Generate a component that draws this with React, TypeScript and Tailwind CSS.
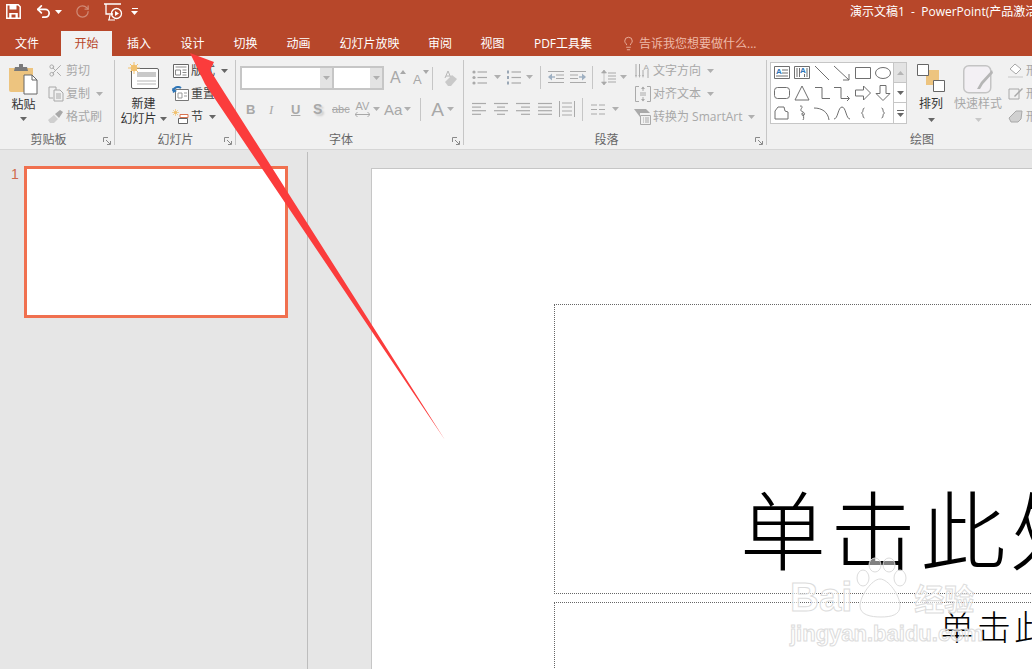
import type { ReactNode } from 'react';
import { Lightbulb, Undo2, RotateCw, Scissors } from 'lucide-react';

// ---- small shared bits ----

const Caret = ({ className = '', tone = 'text-[#b0b0b0]' }: { className?: string; tone?: string }) => (
  <svg width="7" height="4" viewBox="0 0 7 4" className={`shrink-0 ${tone} ${className}`}>
    <path d="M0 0h7L3.5 4z" fill="currentColor" />
  </svg>
);

const Divider = ({ className = '' }: { className?: string }) => <div className={`w-px h-[23px] bg-[#c6c6c6] shrink-0 ${className}`} />;

const Launcher = () => (
  <svg width="8" height="8" viewBox="0 0 8 8" className="absolute right-[4px] bottom-[4px] text-[#8a8a8a]">
    <path d="M.5 5V.5H5M3 3l4 4M7.5 4v3.5H4" fill="none" stroke="currentColor" />
  </svg>
);

function Group({ label, className, labelClass = '', children, last }: { label: string; className: string; labelClass?: string; children: ReactNode; last?: boolean }) {
  return (
    <div className={`relative flex flex-col shrink-0 h-full ${className}`}>
      <div className="flex-1 flex min-h-0">{children}</div>
      <div className={`h-[19px] text-center text-[12px] leading-[19px] text-[#666666] ${labelClass}`}>{label}</div>
      {!last && <Launcher />}
      {!last && <div className="absolute right-0 top-[4px] bottom-[4px] w-px bg-[#c6c6c6]" />}
    </div>
  );
}

const SmallRow = ({ icon, label, caret, dark }: { icon: ReactNode; label: string; caret?: boolean; dark?: boolean }) => (
  <div className={`h-[23px] flex items-center whitespace-nowrap text-[12px] ${dark ? 'text-[#444444]' : 'text-[#a8a8a8]'}`}>
    <span className="w-[17px] flex justify-center shrink-0">{icon}</span>
    <span className="ml-[2px]">{label}</span>
    {caret && <Caret className="ml-[6px]" tone={dark ? 'text-[#666666]' : 'text-[#b0b0b0]'} />}
  </div>
);

// lines used by the paragraph icons: [x1, x2] per row
const LinesIcon = ({ rows, className = '' }: { rows: [number, number][]; className?: string }) => (
  <svg width="15" height="14" viewBox="0 0 15 14" className={`shrink-0 text-[#aaaaaa] ${className}`}>
    {rows.map(([a, b], i) => (
      <path key={i} d={`M${a} ${1.5 + i * 3.6}H${b}`} stroke="currentColor" strokeWidth="1.2" />
    ))}
  </svg>
);

const BulletIcon = ({ numbered, className = '' }: { numbered?: boolean; className?: string }) => (
  <svg width="15" height="15" viewBox="0 0 15 15" className={`shrink-0 text-[#aaaaaa] ${className}`}>
    {[2, 7.5, 13].map((y) => (
      <g key={y}>
        {numbered ? <path d={`M1 ${y - 1.5}h2v3H1z`} fill="#9aa7b5" /> : <circle cx="2" cy={y} r="1.6" fill="currentColor" />}
        <path d={`M5.5 ${y}H15`} stroke="currentColor" strokeWidth="1.2" />
      </g>
    ))}
  </svg>
);

// ---- title bar icons ----

const SaveIcon = () => (
  <svg width="15" height="15" viewBox="0 0 15 15" className="ml-[6px] shrink-0 text-white">
    <path d="M.8.8h11.4l2 2v11.4H.8z" fill="none" stroke="currentColor" strokeWidth="1.5" />
    <path d="M3.5 1h7v4.4h-7zM3.2 9h8.6v5.5H3.2z" fill="currentColor" />
    <path d="M5.5 10.5h4v3h-4z" fill="#b7472a" />
  </svg>
);

const PresentIcon = () => (
  <svg width="20" height="20" viewBox="0 0 20 20" className="text-white">
    <path d="M1 2h17M3 2v10h7" fill="none" stroke="currentColor" strokeWidth="1.3" />
    <circle cx="13.5" cy="11.5" r="5" fill="none" stroke="currentColor" strokeWidth="1.3" />
    <path d="M12 9l4 2.5-4 2.5z" fill="currentColor" />
    <path d="M5 18h7M7 13l-1 5" stroke="currentColor" strokeWidth="1.2" />
  </svg>
);

// ---- ribbon icons ----

const PasteIcon = () => (
  <svg width="29" height="31" viewBox="0 0 29 31">
    <path d="M0 4h24v24H2a2 2 0 0 1-2-2z" fill="#edc47f" />
    <path d="M6 3h4V1a2 2 0 0 1 4 0v2h4l1 4H5z" fill="#7a7a7a" />
    <path d="M15 11h8l5 5v14H15z" fill="#fff" stroke="#666" />
    <path d="M23 11v5h5" fill="none" stroke="#666" />
  </svg>
);

const CopyIcon = () => (
  <svg width="16" height="16" viewBox="0 0 16 16" className="text-[#a8a8a8]">
    <path d="M1 1h7v3M1 1v11h4M6 4h6l3 3v8H6z" fill="none" stroke="currentColor" />
    <path d="M8 8h5M8 10h5M8 12h5" stroke="currentColor" />
  </svg>
);

const BrushIcon = () => (
  <svg width="17" height="15" viewBox="0 0 17 15">
    <path d="M1 11l6-5 4 4-4 4H3z" fill="#cfcfcf" />
    <path d="M8 5l5-4 3 2-4 6z" fill="#a8a8a8" />
  </svg>
);

const NewSlideIcon = () => (
  <svg width="31" height="28" viewBox="0 0 31 28">
    <rect x="3.5" y="6.5" width="27" height="20" rx="1.5" fill="#fff" stroke="#666" />
    <path d="M9 10h19v5H9z" fill="#c9c9c9" />
    <path d="M9 19h19M9 22h19" stroke="#b5b5b5" />
    <circle cx="6" cy="6" r="3.2" fill="#f1c16f" />
    <path d="M6 0v12M0 6h12M2 2l8 8M10 2l-8 8" stroke="#f1c16f" />
  </svg>
);

const LayoutIcon = () => (
  <svg width="16" height="14" viewBox="0 0 16 14">
    <path d="M.5.5h15v13H.5z" fill="#fff" stroke="#666" />
    <path d="M2.5 3h11M2.5 6h5v5h-5zM9.5 6h4M9.5 8.500h4M9.500 11h4" fill="none" stroke="#8a8a8a" />
  </svg>
);

const ResetIcon = () => (
  <svg width="17" height="15" viewBox="0 0 17 15">
    <path d="M3.500 3.500h13v11h-13z" fill="#fff" stroke="#777" />
    <path d="M6 7h4v5H6zM12 7h3M12 10h3" fill="none" stroke="#999" />
    <path d="M1 5a5 5 0 0 1 8-3" fill="none" stroke="#2e75b6" strokeWidth="2" />
    <path d="M0 2l1 5 4-2z" fill="#2e75b6" />
  </svg>
);

const SectionIcon = () => (
  <svg width="17" height="15" viewBox="0 0 17 15">
    <path d="M8 5.500h8v3H8z" fill="#fff" stroke="#d9734e" />
    <path d="M6.500 9.500h9v5h-9z" fill="#fff" stroke="#666" />
    <circle cx="3.500" cy="3.500" r="1.600" fill="#f1c16f" />
    <path d="M3.500 0v7M0 3.500h7M1 1l5 5M6 1L1 6" stroke="#f1c16f" strokeWidth=".7" />
  </svg>
);

const GrowIcon = ({ up }: { up: boolean }) => (
  <span className="relative flex items-end h-[16px] w-[16px] text-[#a8a8a8]">
    <span className={`leading-none font-['Liberation_Sans',sans-serif] ${up ? 'text-[16px]' : 'text-[13px]'}`}>A</span>
    <svg width="6" height="4" viewBox="0 0 6 4" className="absolute right-0 top-0">
      <path d={up ? 'M0 4h6L3 0z' : 'M0 0h6L3 4z'} fill="currentColor" />
    </svg>
  </span>
);

const EraserIcon = () => (
  <svg width="15" height="17" viewBox="0 0 15 17">
    <path d="M6 1L3 8M6 1l3 7M4 6h4" fill="none" stroke="#b8b8b8" />
    <path d="M3 12l7-7 5 4-6 7H6z" fill="#c9c9c9" />
  </svg>
);

const SpacingIcon = () => (
  <svg width="15" height="17" viewBox="0 0 15 17" className="text-[#aaaaaa] shrink-0">
    <path d="M3 1v15M0.500 4L3 1l2.500 3zM.5 13L3 16l2.500-3z" fill="currentColor" stroke="currentColor" strokeWidth=".6" />
    <path d="M7 4h8M7 7h8M7 10h8M7 13h8" stroke="currentColor" strokeWidth="1.100" />
  </svg>
);

const IndentIcon = ({ flip }: { flip?: boolean }) => (
  <svg width="16" height="14" viewBox="0 0 16 14" className={`text-[#aaaaaa] shrink-0 ${flip ? 'scale-x-[-1]' : ''}`}>
    <path d="M0 1.500h16M8 5h8M8 8.500h8M0 12.500h16" stroke="currentColor" strokeWidth="1.200" />
    <path d="M1 7h6" stroke="#9fb0c2" strokeWidth="1.400" />
    <path d="M4 3.500L0 7l4 3.500z" fill="#9fb0c2" />
  </svg>
);

const TextDirIcon = () => (
  <svg width="16" height="16" viewBox="0 0 16 16" className="text-[#aaaaaa]">
    <path d="M1 1v11M4.500 1v11M8 7v5" stroke="currentColor" />
    <path d="M0 12l1 3 1-3M3.500 12l1 3 1-3M7 12l1 3 1-3" fill="currentColor" />
    <text x="8.500" y="7" fontSize="8" fill="currentColor" fontFamily="Liberation Sans">A</text>
    <path d="M13 7v8" stroke="currentColor" />
  </svg>
);

const AlignTextIcon = () => (
  <svg width="16" height="16" viewBox="0 0 16 16" className="text-[#aaaaaa]">
    <path d="M4 .500H.5v15H4M12 .500h3.500v15H12" fill="none" stroke="currentColor" />
    <path d="M8 1v4M8 15v-4M5 7h6M5 9h6" stroke="currentColor" />
    <path d="M6 3l2-2.500L10 3zM6 13l2 2.500L10 13z" fill="currentColor" />
  </svg>
);

const SmartArtIcon = () => (
  <svg width="17" height="16" viewBox="0 0 17 16" className="text-[#aaaaaa]">
    <path d="M0 0h12l4 4H6v4z" fill="currentColor" />
    <path d="M6.500 6.500h10v9h-10z" fill="#f1f1f1" stroke="currentColor" />
    <path d="M9 9h1M11 9h4M9 11h1M11 11h4M9 13h1M11 13h4" stroke="currentColor" />
  </svg>
);

// ---- shape gallery ----

const stroke = { fill: 'none', stroke: '#6f6f6f', strokeWidth: 1 };
const gallery: ReactNode[] = [
  <g key="0"><path d="M2.500 3.500h15v12h-15z" {...stroke} /><text x="4" y="11" fontSize="8" fontWeight="700" fill="#2e75b6" fontFamily="Liberation Sans">A</text><path d="M10 7h6M10 10h6M4 13h12" {...stroke} /></g>,
  <g key="1"><path d="M2.500 3.500h15v12h-15z" {...stroke} /><text x="8" y="10" fontSize="8" fontWeight="700" fill="#2e75b6" fontFamily="Liberation Sans">A</text><path d="M5 5v9M7.500 5v9M12.500 11v3M15 5v9" {...stroke} /></g>,
  <path key="2" d="M3 3l14 14" {...stroke} />,
  <path key="3" d="M2 3l15 14M17 11v6h-6" {...stroke} />,
  <path key="4" d="M2.500 4.500h15v11h-15z" {...stroke} />,
  <ellipse key="5" cx="10" cy="10" rx="7.500" ry="5.500" {...stroke} />,
  <rect key="6" x="2.500" y="4.500" width="15" height="11" rx="3" {...stroke} />,
  <path key="7" d="M10 3l7 14H3z" {...stroke} />,
  <path key="8" d="M3 4.500h7v11h8" {...stroke} />,
  <path key="9" d="M2 4.500h7v11h8M15 13l2.500 2.500L15 18" {...stroke} />,
  <path key="10" d="M2.500 7h8V3l7 7-7 7v-4h-8z" {...stroke} />,
  <path key="11" d="M7 2.500h6v8h4l-7 7-7-7h4z" {...stroke} />,
  <path key="12" d="M6 4h6l1 4 3 1v7H3V8z" {...stroke} />,
  <path key="13" d="M8 3c6 0-3 4 3 6 4 2-1 6-1 2s3 4 1 6" {...stroke} />,
  <path key="14" d="M2 5c8 0 14 4 15 12" {...stroke} />,
  <path key="15" d="M2 16C6 16 6 4 10 4s4 12 8 12" {...stroke} />,
  <path key="16" d="M11.500 5c-2.500 0-.5 4-3 5 2.500 1 .5 5 3 5" {...stroke} />,
  <path key="17" d="M8.500 5c2.500 0 .5 4 3 5-2.500 1-.5 5-3 5" {...stroke} />,
];

export default function App() {
  const tabs = [
    { label: '文件', w: 'w-[54px] mr-[7px]' },
    { label: '开始', w: 'w-[51px]', active: true },
    { label: '插入', w: 'w-[54px]' },
    { label: '设计', w: 'w-[53px]' },
    { label: '切换', w: 'w-[53px]' },
    { label: '动画', w: 'w-[53px]' },
    { label: '幻灯片放映', w: 'w-[89px]' },
    { label: '审阅', w: 'w-[52px]' },
    { label: '视图', w: 'w-[53px]' },
    { label: 'PDF工具集', w: 'w-[88px]' },
  ];

  return (
    <div className="relative w-[1032px] h-[669px] overflow-hidden flex flex-col bg-[#e6e6e6] font-['Open_Sans','Noto_Sans_CJK_SC',sans-serif]">
      {/* Title bar */}
      <div className="h-[31px] shrink-0 bg-[#b7472a] flex items-center text-white pb-[8px]">
        <SaveIcon />
        <Undo2 className="ml-[14px] w-[17px] h-[17px] shrink-0" strokeWidth={2.4} />
        <Caret className="ml-[3px]" tone="text-white" />
        <RotateCw className="ml-[13px] w-[15px] h-[15px] shrink-0 text-[#d08a76]" strokeWidth={2} />
        <span className="ml-[13px] shrink-0"><PresentIcon /></span>
        <span className="ml-[8px] shrink-0 flex flex-col items-center gap-[2px]">
          <span className="w-[6px] h-px bg-white" />
          <Caret tone="text-white" />
        </span>
        <span className="ml-[712px] shrink-0 text-[12px] whitespace-nowrap">演示文稿1{'\u00a0'} - {'\u00a0'}PowerPoint(产品激活失败)</span>
      </div>

      {/* Tabs */}
      <div className="h-[25px] shrink-0 bg-[#b7472a] flex items-stretch text-[12px] text-white">
        {tabs.map((t) => (
          <div key={t.label} className={`${t.w} shrink-0 flex items-center justify-center whitespace-nowrap ${t.active ? 'bg-[#f1f1f1] text-[#b7472a]' : ''}`}>
            {t.label}
          </div>
        ))}
        <div className="ml-[14px] flex items-center text-[#eeb9a8] whitespace-nowrap">
          <Lightbulb className="w-[15px] h-[15px]" strokeWidth={1.4} />
          <span className="ml-[3px]">告诉我您想要做什么...</span>
        </div>
      </div>

      {/* Ribbon */}
      <div className="h-[94px] shrink-0 bg-[#f1f1f1] border-b border-[#d6d6d6] flex">
        <Group label="剪贴板" className="w-[115px]" labelClass="pr-[18px]">
          <div className="w-[47px] shrink-0 flex flex-col items-center pt-[8px]">
            <PasteIcon />
            <span className="mt-[1px] text-[12px] leading-[17px] text-[#333333]">粘贴</span>
            <Caret className="mt-[4px]" tone="text-[#666666]" />
          </div>
          <div className="pt-[3px]">
            <SmallRow icon={<Scissors className="w-[15px] h-[15px] text-[#a8a8a8]" strokeWidth={1.5} />} label="剪切" />
            <SmallRow icon={<CopyIcon />} label="复制" caret />
            <SmallRow icon={<BrushIcon />} label="格式刷" />
          </div>
        </Group>

        <Group label="幻灯片" className="w-[121px]">
          <div className="w-[57px] shrink-0 flex flex-col items-center pt-[6px]">
            <NewSlideIcon />
            <span className="mt-[6px] text-[12px] leading-[15px] text-[#333333]">新建</span>
            <span className="flex items-center text-[12px] leading-[15px] text-[#333333] whitespace-nowrap">幻灯片<Caret className="ml-[3px]" tone="text-[#666666]" /></span>
          </div>
          <div className="pt-[3px]">
            <SmallRow dark icon={<LayoutIcon />} label="版式" caret />
            <SmallRow dark icon={<ResetIcon />} label="重置" />
            <SmallRow dark icon={<SectionIcon />} label="节" caret />
          </div>
        </Group>

        <Group label="字体" className="w-[228px]" labelClass="pr-[18px]">
          <div className="flex flex-col pl-[4px] pt-[10px]">
            <div className="flex items-center h-[24px]">
              <div className="w-[94px] h-[24px] border-2 border-[#c6c6c6] bg-white flex justify-end">
                <div className="w-[12px] bg-[#e3e3e3] flex items-center justify-center"><Caret /></div>
              </div>
              <div className="w-[50px] h-[24px] border-2 border-l-0 border-[#c6c6c6] bg-white flex justify-end">
                <div className="w-[12px] bg-[#e3e3e3] flex items-center justify-center"><Caret /></div>
              </div>
              <span className="ml-[6px]"><GrowIcon up /></span>
              <span className="ml-[7px]"><GrowIcon up={false} /></span>
              <Divider className="ml-[3px]" />
              <span className="ml-[9px]"><EraserIcon /></span>
            </div>
            <div className="flex items-center h-[24px] mt-[7px] text-[#a8a8a8] font-['Liberation_Sans',sans-serif] leading-none">
              <span className="ml-[6px] w-[12px] text-[13px] font-bold">B</span>
              <span className="ml-[11px] w-[10px] text-[13px] italic font-['Liberation_Serif',serif]">I</span>
              <span className="ml-[12px] w-[12px] text-[13px] font-bold underline">U</span>
              <span className="ml-[10px] w-[12px] text-[14px] font-bold [text-shadow:2px_2px_2px_#cccccc]">S</span>
              <span className="ml-[7px] w-[18px] text-[11px] line-through">abc</span>
              <span className="ml-[4px] w-[17px] flex flex-col items-center text-[11px]">
                AV
                <svg width="15" height="5" viewBox="0 0 15 5"><path d="M0 2.500h15M2.500 0L0 2.500 2.500 5M12.500 0L15 2.500 12.500 5" fill="none" stroke="currentColor" /></svg>
              </span>
              <Caret className="ml-[2px]" />
              <span className="ml-[4px] text-[15px]">Aa</span>
              <Caret className="ml-[2px]" />
              <Divider className="ml-[9px]" />
              <span className="ml-[10px] text-[19px]">A</span>
              <Caret className="ml-[3px]" />
            </div>
          </div>
        </Group>

        <Group label="段落" className="w-[303px]" labelClass="pr-[18px]">
          <div className="w-[170px] shrink-0 flex flex-col pl-[8px] pt-[9px]">
            <div className="flex items-center h-[24px]">
              <BulletIcon />
              <Caret className="ml-[7px]" />
              <BulletIcon numbered className="ml-[5px]" />
              <Caret className="ml-[5px]" />
              <Divider className="ml-[7px]" />
              <span className="ml-[7px]"><IndentIcon /></span>
              <span className="ml-[6px]"><IndentIcon flip /></span>
              <Divider className="ml-[6px]" />
              <span className="ml-[8px]"><SpacingIcon /></span>
              <Caret className="ml-[4px]" />
            </div>
            <div className="flex items-center h-[24px] mt-[8px]">
              <LinesIcon rows={[[0, 14], [0, 9], [0, 14], [0, 9]]} />
              <LinesIcon className="ml-[7px]" rows={[[0, 14], [3, 11], [0, 14], [3, 11]]} />
              <LinesIcon className="ml-[7px]" rows={[[0, 14], [5, 14], [0, 14], [5, 14]]} />
              <LinesIcon className="ml-[7px]" rows={[[0, 14], [0, 14], [0, 14], [0, 14]]} />
              <svg width="16" height="16" viewBox="0 0 16 16" className="ml-[6px] text-[#aaaaaa] shrink-0">
                <path d="M.5 0v16M15.500 0v16M3 2h10M3 6h10M3 10h10M3 14h10" stroke="currentColor" />
              </svg>
              <Divider className="ml-[7px]" />
              <svg width="14" height="11" viewBox="0 0 14 11" className="ml-[8px] text-[#aaaaaa] shrink-0">
                <path d="M0 1h6M8 1h6M0 5.500h6M8 5.500h6M0 10h6M8 10h6" stroke="currentColor" strokeWidth="1.200" />
              </svg>
              <Caret className="ml-[7px]" />
            </div>
          </div>
          <div className="pt-[3px]">
            <SmallRow icon={<TextDirIcon />} label="文字方向" caret />
            <SmallRow icon={<AlignTextIcon />} label="对齐文本" caret />
            <SmallRow icon={<SmartArtIcon />} label="转换为 SmartArt" caret />
          </div>
        </Group>

        <Group label="绘图" className="w-[310px]" last>
          <div className="flex pl-[3px] pt-[6px] items-start">
            <div className="w-[137px] h-[62px] shrink-0 border border-[#c6c6c6] flex">
              <div className="w-[122px] bg-white grid grid-cols-6 auto-rows-[20px] pl-px">
                {gallery.map((g, i) => (
                  <svg key={i} width="20" height="20" viewBox="0 0 20 20">{g}</svg>
                ))}
              </div>
              <div className="flex-1 border-l border-[#c6c6c6] flex flex-col bg-white">
                <div className="h-[20px] bg-[#e3e3e3] flex items-center justify-center border-b border-[#c6c6c6]">
                  <svg width="7" height="4" viewBox="0 0 7 4"><path d="M0 4h7L3.500 0z" fill="#b5b5b5" /></svg>
                </div>
                <div className="h-[20px] flex items-center justify-center border-b border-[#c6c6c6]"><Caret tone="text-[#666666]" /></div>
                <div className="flex-1 flex flex-col items-center justify-center gap-[2px]">
                  <span className="w-[7px] h-px bg-[#666666]" />
                  <Caret tone="text-[#666666]" />
                </div>
              </div>
            </div>
            <div className="w-[48px] shrink-0 flex flex-col items-center">
              <svg width="28" height="28" viewBox="0 0 28 28" className="mt-[2px]">
                <path d="M9 6h13v15H9z" fill="#edc47f" />
                <path d="M.5.500h11v11H.5zM16.500 16.500h11v11h-11z" fill="#fff" stroke="#666" />
              </svg>
              <span className="mt-[3px] text-[12px] leading-[17px] text-[#333333]">排列</span>
              <Caret className="mt-[6px]" tone="text-[#666666]" />
            </div>
            <div className="w-[46px] shrink-0 flex flex-col items-center">
              <svg width="30" height="30" viewBox="0 0 30 30" className="mt-[3px]">
                <rect x=".75" y=".75" width="27" height="27" rx="5" fill="#f3f0f4" stroke="#c4c4c4" strokeWidth="1.500" />
                <path d="M14 24l4-7 11-12 1 3-10 11-3 5z" fill="#b5b5b5" />
              </svg>
              <span className="text-[12px] leading-[17px] text-[#a8a8a8] whitespace-nowrap">快速样式</span>
              <Caret className="mt-[6px]" tone="text-[#c8c8c8]" />
            </div>
            <div className="ml-[6px] -mt-[3px]">
              <SmallRow
                icon={<svg width="16" height="15" viewBox="0 0 16 15"><path d="M7 1l6 5-5 5-6-5z" fill="#fff" stroke="#a8a8a8" /><path d="M0 13h15v2H0z" fill="#dcdcdc" /></svg>}
                label="形状填充"
              />
              <SmallRow
                icon={<svg width="16" height="15" viewBox="0 0 16 15"><path d="M1 3h10v10H1z" fill="none" stroke="#a8a8a8" /><path d="M6 10l8-8 1 1-8 8z" fill="#a8a8a8" /></svg>}
                label="形状轮廓"
              />
              <SmallRow
                icon={<svg width="16" height="15" viewBox="0 0 16 15"><path d="M1 9l7-7h6l-1 8-3 3H3z" fill="#d0d0d0" stroke="#a8a8a8" /></svg>}
                label="形状效果"
              />
            </div>
          </div>
        </Group>
      </div>

      {/* Work area */}
      <div className="flex-1 flex min-h-0 pt-[2px]">
        <div className="w-[308px] shrink-0 border-r border-[#bdbdbd] flex items-start pt-[14px] pl-[11px]">
          <span className="w-[13px] text-[14px] leading-[16px] text-[#cf6a4e] font-['Liberation_Sans',sans-serif]">1</span>
          <div className="w-[264px] h-[152px] border-[3px] border-[#f0704f] bg-white" />
        </div>
        <div className="flex-1 min-w-0 pl-[63px] pt-[16px]">
          <div className="w-[900px] h-[600px] bg-white border-l border-t border-[#c6c6c6] pl-[182px] pt-[135px]">
            <div className="h-[290px] border border-dotted border-[#666666] flex items-end pl-[185px] pb-[10px] overflow-hidden">
              <span className="text-[86px] leading-[104px] tracking-[4px] font-light text-black whitespace-nowrap">单击此处添加标题</span>
            </div>
            <div className="mt-[8px] h-[200px] border border-dotted border-[#666666] pl-[385px] pt-[1px]">
              <span className="text-[34px] leading-[46px] tracking-[3px] font-light text-black whitespace-nowrap">单击此处添加副标题</span>
            </div>
          </div>
        </div>
      </div>

      {/* Red annotation arrow */}
      <svg width="1032" height="669" viewBox="0 0 1032 669" className="absolute inset-0 pointer-events-none">
        <path d="M190 53L214 62 210 70 445 440 205 84z" fill="#fb3c3c" />
      </svg>

      {/* Baidu watermark */}
      <div className="absolute left-[790px] top-[557px] w-[190px] pointer-events-none flex flex-col items-start text-white/60 [-webkit-text-stroke:1px_#dcdcdc] font-['Liberation_Sans',sans-serif]">
        <div className="flex items-end h-[62px]">
          <span className="text-[40px] leading-[44px] font-bold">Bai</span>
          <svg width="56" height="62" viewBox="0 0 56 62" className="shrink-0">
            <g fill="#ffffff" fillOpacity=".5" stroke="#dcdcdc">
              <ellipse cx="11" cy="21" rx="6" ry="8" />
              <ellipse cx="23" cy="8" rx="6" ry="7" />
              <ellipse cx="37" cy="8" rx="6" ry="7" />
              <ellipse cx="48" cy="21" rx="6" ry="8" />
              <path d="M28 22c8 0 20 16 20 27 0 9-9 11-19 11S8 58 8 49c0-10 12-27 20-27z" />
            </g>
          </svg>
          <span className="text-[30px] leading-[44px] font-['Noto_Sans_CJK_SC',sans-serif] font-bold ml-[6px] whitespace-nowrap">经验</span>
        </div>
        <span className="text-[22px] leading-[30px] font-bold whitespace-nowrap">jingyan.baidu.com</span>
      </div>
    </div>
  );
}
